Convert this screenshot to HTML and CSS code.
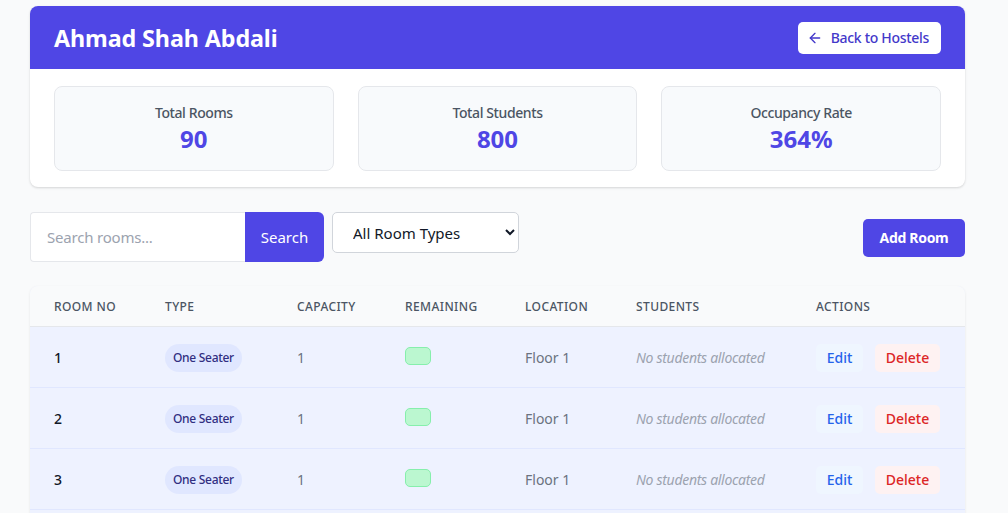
FILE: index.html
```html
<!DOCTYPE html>
<html lang="en">
<head>
<meta charset="utf-8">
<title>Ahmad Shah Abdali</title>
<link rel="stylesheet" href="styles.css">
</head>
<body>
<div class="page">
  <section class="hostel-card">
    <header class="hostel-head">
      <h1 class="hostel-title">Ahmad Shah Abdali</h1>
      <button class="back-btn" type="button">
        <svg class="back-icon" viewBox="0 0 24 24" width="16" height="16" fill="none" stroke="currentColor" stroke-width="2" stroke-linecap="round" stroke-linejoin="round"><path d="M19 12H5"/><path d="M12 19l-7-7 7-7"/></svg>
        <span>Back to Hostels</span>
      </button>
    </header>
    <div class="stats">
      <div class="stat"><div class="stat-label">Total Rooms</div><div class="stat-value">90</div></div>
      <div class="stat"><div class="stat-label">Total Students</div><div class="stat-value">800</div></div>
      <div class="stat"><div class="stat-label">Occupancy Rate</div><div class="stat-value">364%</div></div>
    </div>
  </section>

  <div class="toolbar">
    <div class="filters">
      <div class="search">
        <input class="search-input" type="text" placeholder="Search rooms...">
        <button class="search-btn" type="button">Search</button>
      </div>
      <select class="type-select">
        <option>All Room Types</option>
      </select>
    </div>
    <button class="add-btn" type="button">Add Room</button>
  </div>

  <div class="table-wrap">
    <table class="rooms">
      <colgroup>
        <col class="c1"><col class="c2"><col class="c3"><col class="c4"><col class="c5"><col class="c6"><col class="c7">
      </colgroup>
      <thead>
        <tr><th>Room No</th><th>Type</th><th>Capacity</th><th>Remaining</th><th>Location</th><th>Students</th><th>Actions</th></tr>
      </thead>
      <tbody>
        <tr>
          <td class="room-no">1</td>
          <td><span class="badge">One Seater</span></td>
          <td class="muted">1</td>
          <td><span class="remain"></span></td>
          <td class="muted">Floor 1</td>
          <td class="none">No students allocated</td>
          <td><div class="actions"><button class="edit" type="button">Edit</button><button class="del" type="button">Delete</button></div></td>
        </tr>
        <tr>
          <td class="room-no">2</td>
          <td><span class="badge">One Seater</span></td>
          <td class="muted">1</td>
          <td><span class="remain"></span></td>
          <td class="muted">Floor 1</td>
          <td class="none">No students allocated</td>
          <td><div class="actions"><button class="edit" type="button">Edit</button><button class="del" type="button">Delete</button></div></td>
        </tr>
        <tr>
          <td class="room-no">3</td>
          <td><span class="badge">One Seater</span></td>
          <td class="muted">1</td>
          <td><span class="remain"></span></td>
          <td class="muted">Floor 1</td>
          <td class="none">No students allocated</td>
          <td><div class="actions"><button class="edit" type="button">Edit</button><button class="del" type="button">Delete</button></div></td>
        </tr>
      </tbody>
    </table>
    <div class="table-more"></div>
  </div>
</div>
</body>
</html>
```

FILE: styles.css
```css
* { box-sizing: border-box; }
html, body { margin: 0; padding: 0; }
body {
  background: #f9fafb;
  font-family: "Noto Sans", "Open Sans", sans-serif;
  color: #111827;
  overflow: hidden;
}
.page {
  width: 935px;
  margin-left: 30px;
  padding-top: 6px;
}
.hostel-card {
  background: #fff;
  border-radius: 8px;
  box-shadow: 0 1px 3px rgba(0,0,0,0.1), 0 1px 2px rgba(0,0,0,0.06);
  overflow: hidden;
}
.hostel-head {
  background: #4f46e5;
  height: 63px;
  padding: 0 24px;
  display: flex;
  align-items: center;
  justify-content: space-between;
}
.hostel-title {
  margin: 0;
  color: #fff;
  font-size: 23.3px;
  font-weight: 700;
  letter-spacing: -0.1px;
}
.back-btn {
  display: flex;
  align-items: center;
  gap: 8px;
  height: 32px;
  padding: 0 12px 0 9px;
  background: #fff;
  border: 0;
  border-radius: 5px;
  color: #4338ca;
  font-family: inherit;
  font-size: 14px;
  font-weight: 500;
  letter-spacing: -0.3px;
}
.back-icon { display: block; }
.stats {
  display: grid;
  grid-template-columns: 1fr 1fr 1fr;
  gap: 24px;
  padding: 17px 24px 16px;
}
.stat {
  height: 85px;
  background: #f8fafc;
  border: 1px solid #e5e7eb;
  border-radius: 8px;
  display: flex;
  flex-direction: column;
  align-items: center;
  justify-content: center;
}
.stat-label {
  color: #4b5563;
  font-size: 14px;
  font-weight: 500;
  line-height: 20px;
  letter-spacing: -0.4px;
}
.stat-value {
  color: #4f46e5;
  font-size: 24px;
  font-weight: 700;
  line-height: 32px;
}
.toolbar {
  display: flex;
  justify-content: space-between;
  align-items: center;
  margin-top: 25px;
  height: 50px;
}
.filters {
  display: flex;
  align-items: flex-start;
  gap: 8px;
  height: 50px;
}
.search { display: flex; height: 50px; }
.search-input {
  width: 215px;
  height: 50px;
  border: 1px solid #e5e7eb;
  border-right: 0;
  border-radius: 4px 0 0 4px;
  padding: 0 16px;
  font-family: inherit;
  font-size: 15px;
  letter-spacing: -0.2px;
  background: #fff;
  color: #111827;
  outline: none;
}
.search-input::placeholder { color: #9ca3af; }
.search-btn {
  width: 79px;
  height: 50px;
  border: 0;
  border-radius: 0 6px 6px 0;
  background: #4f46e5;
  color: #fff;
  font-family: inherit;
  font-size: 15px;
}
.type-select {
  width: 187px;
  height: 41px;
  border: 1px solid #d1d5db;
  border-radius: 5px;
  background: #fff;
  padding: 0 14px 0 16px;
  font-family: inherit;
  font-size: 15px;
  color: #111827;
}
.add-btn {
  width: 102px;
  height: 38px;
  border: 0;
  border-radius: 5px;
  background: #4f46e5;
  color: #fff;
  font-family: inherit;
  font-size: 14px;
  font-weight: 700;
  letter-spacing: -0.3px;
  margin-top: 1px;
}
.table-wrap {
  margin-top: 24px;
  background: #eef2ff;
  border-radius: 8px 8px 0 0;
  box-shadow: 0 1px 3px rgba(0,0,0,0.08);
  overflow: hidden;
}
.rooms {
  width: 935px;
  border-collapse: collapse;
  table-layout: fixed;
}
.c1 { width: 111px; }
.c2 { width: 132px; }
.c3 { width: 108px; }
.c4 { width: 120px; }
.c5 { width: 111px; }
.c6 { width: 180px; }
.c7 { width: 173px; }
.rooms th {
  height: 40px;
  padding: 1px 24px 0;
  background: #f9fafb;
  border-bottom: 1px solid #e5e7eb;
  text-align: left;
  font-size: 12px;
  font-weight: 500;
  color: #4b5563;
  text-transform: uppercase;
  letter-spacing: 0.4px;
  white-space: nowrap;
}
.rooms td {
  height: 61px;
  padding: 2px 24px 0;
  background: #eef2ff;
  border-bottom: 1px solid #e0e7ff;
  font-size: 14px;
  white-space: nowrap;
  vertical-align: middle;
}
.table-more { height: 40px; }
.rooms .room-no { color: #111827; font-weight: 500; }
.rooms .muted { color: #6b7280; }
.rooms .none { color: #9ca3af; font-style: italic; letter-spacing: -0.3px; }
.badge {
  display: inline-block;
  height: 28px;
  line-height: 28px;
  padding: 0 8px;
  border-radius: 14px;
  background: #e0e7ff;
  color: #312e81;
  font-size: 12px;
  font-weight: 500;
  letter-spacing: -0.3px;
}
.remain {
  display: inline-block;
  width: 26px;
  height: 18px;
  border-radius: 5px;
  background: #bbf7d0;
  border: 1px solid #86efac;
  vertical-align: middle;
  position: relative;
  top: -3px;
}
.actions { display: flex; gap: 12px; align-items: center; }
.edit, .del {
  height: 28px;
  border: 0;
  border-radius: 5px;
  font-family: inherit;
  font-size: 14px;
  font-weight: 500;
  padding: 0;
}
.edit { background: #eff6ff; color: #2563eb; width: 47px; }
.del { background: #fef2f2; color: #dc2626; width: 65px; }
```
